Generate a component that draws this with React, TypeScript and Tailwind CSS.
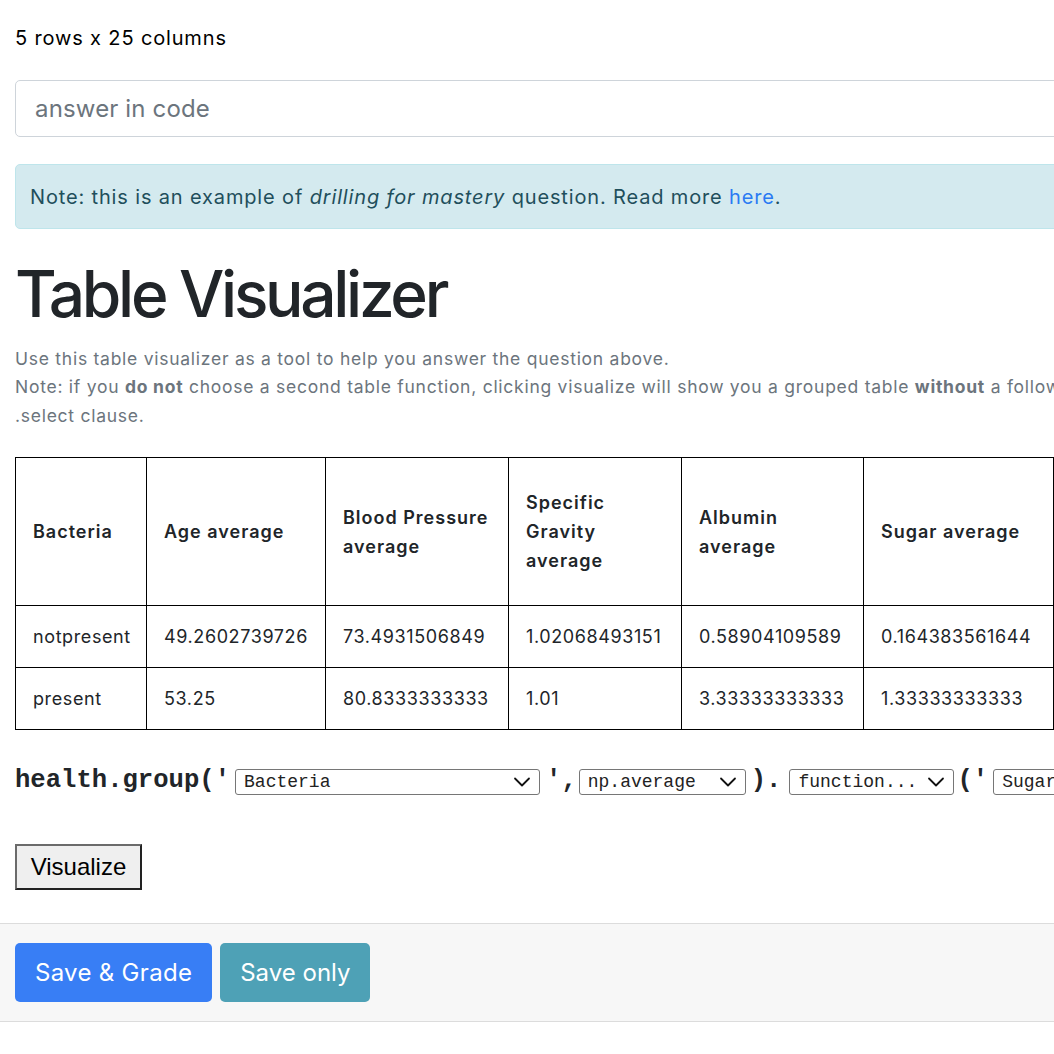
import React from 'react';

const sans = "font-['Inter','Noto_Sans',sans-serif]";
const mono = "font-['Liberation_Mono','DejaVu_Sans_Mono',monospace]";

const headers: React.ReactNode[] = [
    'Bacteria',
    'Age average',
    <>Blood Pressure<br />average</>,
    <>Specific<br />Gravity<br />average</>,
    <>Albumin<br />average</>,
    'Sugar average',
    <>Red Blood Cells<br />average</>,
];

const widths = ['w-[131px]', 'w-[179px]', 'w-[183px]', 'w-[173px]', 'w-[182px]', 'w-[190px]', 'w-[200px]'];

const rows = [
    ['notpresent', '49.2602739726', '73.4931506849', '1.02068493151', '0.58904109589', '0.164383561644', '0.9'],
    ['present', '53.25', '80.8333333333', '1.01', '3.33333333333', '1.33333333333', '0.8'],
];

function Chevron() {
    return (
        <svg className="pointer-events-none absolute right-[8px] top-1/2 -translate-y-1/2" width="18" height="12" viewBox="0 0 18 12" fill="none">
            <path d="M2 2.5 L9 9.5 L16 2.5" stroke="#111" strokeWidth="1.8" strokeLinecap="round" strokeLinejoin="round" />
        </svg>
    );
}

function FakeSelect({ value, width }: { value: string; width: string }) {
    return (
        <span className={`relative inline-flex h-[26px] items-center rounded-[3px] border border-[#767676] bg-white ${width}`}>
            <span className={`${mono} pl-[8px] text-[18px] font-normal leading-none text-[#222]`}>{value}</span>
            <Chevron />
        </span>
    );
}

export default function App() {
    return (
        <div className={`w-[1054px] overflow-hidden bg-white ${sans} text-[#212529]`}>
            <div className="w-[1400px] pl-[15px]">
                <p className="pt-[23px] text-[20px] leading-[30px] tracking-[0.85px] text-black">5 rows x 25 columns</p>

                <input
                    placeholder="answer in code"
                    className="mt-[27px] block h-[57px] w-full rounded-[5px] border border-[#ced4da] px-[19px] text-[24px] tracking-[0.15px] text-[#495057] placeholder:text-[#6c757d] outline-none"
                />

                <div className="mt-[27px] flex h-[65px] items-center rounded-[5px] border border-[#bee5eb] bg-[#d4eaef] px-[14px] text-[20px] tracking-[0.85px] text-[#1f4f5c]">
                    <span>
                        Note: this is an example of <em>drilling for mastery</em> question. Read more{' '}
                        <a href="#" className="text-[#2a7af3]">here</a>.
                    </span>
                </div>

                <h1 className="mt-[27px] text-[64px] font-medium leading-[1.2] tracking-[-3.3px] text-[#212529]">Table Visualizer</h1>

                <p className="mt-[12px] text-[17.5px] leading-[28.5px] tracking-[0.74px] text-[#6c757d]">
                    Use this table visualizer as a tool to help you answer the question above.
                    <br />
                    Note: if you <b>do not</b> choose a second table function, clicking visualize will show you a grouped table <b>without</b> a following
                    <br />
                    .select clause.
                </p>

                <table className="mt-[27px] w-[1238px] table-fixed border-collapse text-[18px] leading-[29px] text-[#212529]">
                    <thead>
                        <tr>
                            {headers.map((h, i) => (
                                <th key={i} className={`${widths[i]} border border-black pl-[17px] pr-[8px] py-[30px] text-left align-middle font-semibold tracking-[1px]`}>
                                    {h}
                                </th>
                            ))}
                        </tr>
                    </thead>
                    <tbody>
                        {rows.map((r) => (
                            <tr key={r[0]}>
                                {r.map((c, i) => (
                                    <td key={i} className="border border-black pl-[17px] pr-[8px] py-[16px] whitespace-nowrap tracking-[0.6px]">
                                        {c}
                                    </td>
                                ))}
                            </tr>
                        ))}
                    </tbody>
                </table>

                <div className={`${mono} mt-[36px] flex h-[30px] items-center whitespace-nowrap text-[25.6px] font-bold text-[#212529]`}>
                    <span>health.group('</span>
                    <span className="ml-[5px]"><FakeSelect value="Bacteria" width="w-[305px]" /></span>
                    <span className="ml-[6px]">',</span>
                    <span className="ml-[2px]"><FakeSelect value="np.average" width="w-[167px]" /></span>
                    <span className="ml-[5px]">).</span>
                    <span className="ml-[8px]"><FakeSelect value="function..." width="w-[165px]" /></span>
                    <span className="ml-[3px]">('</span>
                    <span className="ml-[5px]"><FakeSelect value="Sugar" width="w-[200px]" /></span>
                </div>

                <button className="mt-[48px] block h-[46px] w-[127px] border-2 border-t-[#6b6b6b] border-l-[#6b6b6b] border-r-[#222] border-b-[#222] bg-[#efefef] font-['Liberation_Sans',Arial,sans-serif] text-[24px] text-black">
                    Visualize
                </button>
            </div>

            <div className="mt-[33px] flex gap-[8px] border-y border-[#dcdcdc] bg-[#f7f7f7] px-[15px] py-[19px]">
                <button className="h-[59px] rounded-[5px] bg-[#387ef5] px-[20px] text-[24px] tracking-[0.3px] text-white">Save &amp; Grade</button>
                <button className="h-[59px] rounded-[5px] bg-[#4ea1b6] px-[20px] text-[24px] tracking-[0px] text-white">Save only</button>
            </div>
            <div className="h-[40px]" />
        </div>
    );
}
